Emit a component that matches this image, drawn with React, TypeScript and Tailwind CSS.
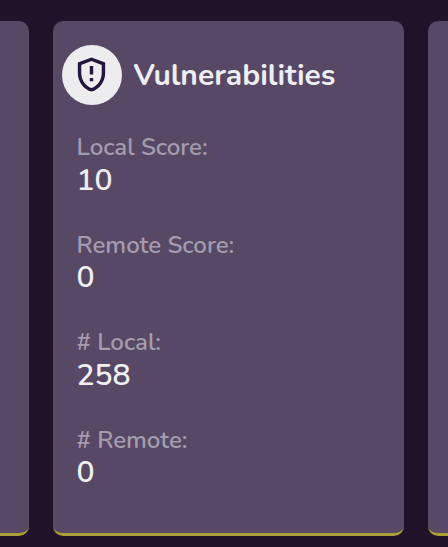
type Stat = { label: string; value: string };

const stats: Stat[] = [
  { label: "Local Score:", value: "10" },
  { label: "Remote Score:", value: "0" },
  { label: "# Local:", value: "258" },
  { label: "# Remote:", value: "0" },
];

const cardClass = "h-[515px] shrink-0 rounded-[10px] border-b-[3px] border-[#aa9f36] bg-[#574866]";

function ShieldIcon() {
  return (
    <svg viewBox="0 0 24 24" className="mr-px mb-px size-[41px]" fill="#24173d" aria-hidden="true">
      <path d="M12 2 4 5v6.09c0 5.05 3.41 9.76 8 10.91 4.59-1.15 8-5.86 8-10.91V5l-8-3zm6 9.09c0 4-2.55 7.7-6 8.83-3.45-1.13-6-4.82-6-8.83v-4.7l6-2.25 6 2.25v4.7zM11 14h2v2h-2zM11 7h2v5h-2z" />
    </svg>
  );
}

export default function App() {
  return (
    <main className="flex h-[547px] w-[448px] gap-6 overflow-hidden bg-[#1f1229] pt-[21px] font-['Nunito','Open_Sans',sans-serif]">
      <div className={`${cardClass} w-[29px] rounded-l-none`} />
      <section className={`${cardClass} w-[351px] pt-6`}>
        <header className="flex items-center gap-[11.5px] pl-[9px]">
          <div className="flex size-[60px] items-center justify-center rounded-full bg-[#ededf0]">
            <ShieldIcon />
          </div>
          <h2 className="whitespace-nowrap pt-0.5 text-[30px] leading-[40px] font-bold text-[#eeedf1]">Vulnerabilities</h2>
        </header>
        <dl className="flex flex-col gap-[24.5px] pt-[26.1px] pl-[23.5px]">
          {stats.map((s) => (
            <div key={s.label} className="h-[73px] whitespace-nowrap">
              <dt className="h-[32.7px] text-[24px] leading-[33px] font-semibold text-[#a49cad]">{s.label}</dt>
              <dd className="text-[30px] leading-[33px] font-semibold text-[#f0eff2]">{s.value}</dd>
            </div>
          ))}
        </dl>
      </section>
      <div className={`${cardClass} w-[40px] rounded-r-none`} />
    </main>
  );
}
